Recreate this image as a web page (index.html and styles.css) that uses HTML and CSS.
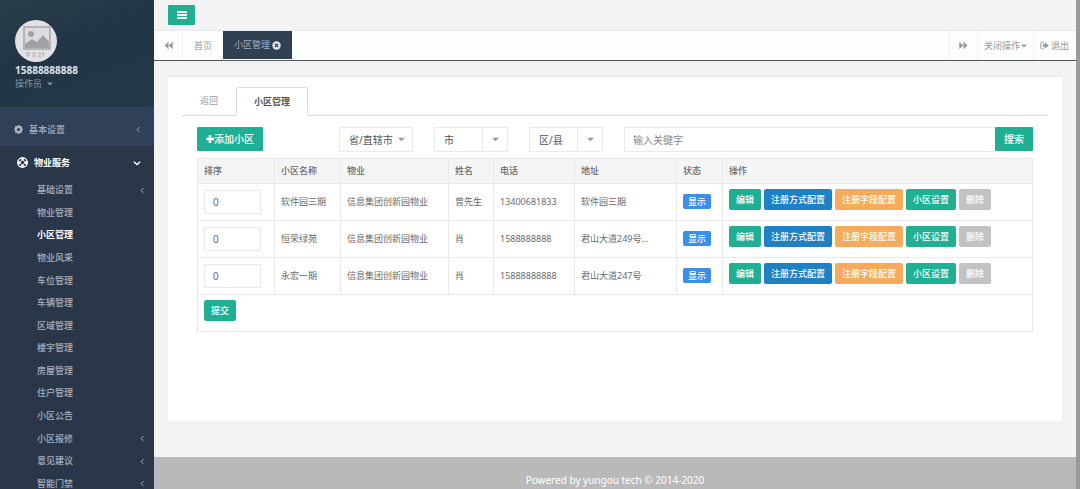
FILE: index.html
```html
<!DOCTYPE html>
<html lang="zh-CN">
<head>
<meta charset="utf-8">
<title>小区管理</title>
<link rel="stylesheet" href="styles.css">
</head>
<body>
<svg class="sprite" aria-hidden="true">
  <symbol id="left" viewBox="0 0 10 10"><path d="M6.500 1.500 3 5l3.500 3.500" fill="none" stroke="currentColor" stroke-width="1.400"/></symbol>
  <symbol id="down" viewBox="0 0 10 10"><path d="M1 3.500 5 7l4-3.500" fill="none" stroke="currentColor" stroke-width="1.700"/></symbol>
  <symbol id="caret" viewBox="0 0 8 8"><path d="M0 2h8L4 6z" fill="currentColor"/></symbol>
  <symbol id="rewind" viewBox="0 0 10 10"><path d="M5 .8v8.400L.5 5zM9.700.8v8.400L5.200 5z" fill="currentColor"/></symbol>
</svg>
<div class="app">
  <aside class="sidebar">
    <header class="profile">
      <svg class="avatar" viewBox="0 0 42 42" role="img" aria-label="头像">
        <circle cx="21" cy="21" r="21" fill="#e2e2e4"/>
        <path d="M9 7h26v22H9z" fill="#dcdcde" stroke="#a5a5aa" stroke-width="1.500"/>
        <circle cx="16" cy="14" r="3" fill="#a0a0a5"/>
        <path d="M10 28v-4l7-5 5 3 6-7 6 7v6z" fill="#a0a0a5"/>
        <path d="M11 33h4m-2-1v5m-2-2h4m2-2h4m-4 3h4m-2-3v4m4-4h3m-3 4h3m-3-2h3m2-3v5m-1-3h3" stroke="#c0aeb0" fill="none"/>
      </svg>
      <strong class="phone">15888888888</strong>
      <button class="role" type="button">操作员 <svg class="caret"><use href="#caret"/></svg></button>
    </header>
    <nav class="menu">
      <a class="group" href="#">
        <svg class="icon" viewBox="0 0 16 16"><circle cx="8" cy="8" r="4.600" fill="none" stroke="currentColor" stroke-width="3.800"/><path d="M8 0v3m0 10v3M0 8h3m10 0h3M2.300 2.300l2 2m7.400 7.400 2 2M13.700 2.300l-2 2m-7.400 7.400-2 2" stroke="currentColor" stroke-width="3"/></svg>
        <span>基本设置</span><svg class="arrow"><use href="#left"/></svg>
      </a>
      <a class="group open" href="#">
        <svg class="icon" viewBox="0 0 16 16"><circle cx="8" cy="8" r="6.900" fill="none" stroke="currentColor" stroke-width="2"/><circle cx="8" cy="8" r="3.200" fill="none" stroke="currentColor" stroke-width="1"/><path d="M8 1v4m0 6v4M1 8h4m6 0h4" stroke="currentColor" stroke-width="4"/></svg>
        <span>物业服务</span><svg class="arrow"><use href="#down"/></svg>
      </a>
      <ul class="submenu">
        <li><a href="#">基础设置<svg class="arrow"><use href="#left"/></svg></a></li>
        <li><a href="#">物业管理</a></li>
        <li><a class="current" href="#">小区管理</a></li>
        <li><a href="#">物业风采</a></li>
        <li><a href="#">车位管理</a></li>
        <li><a href="#">车辆管理</a></li>
        <li><a href="#">区域管理</a></li>
        <li><a href="#">楼宇管理</a></li>
        <li><a href="#">房屋管理</a></li>
        <li><a href="#">住户管理</a></li>
        <li><a href="#">小区公告</a></li>
        <li><a href="#">小区报修<svg class="arrow"><use href="#left"/></svg></a></li>
        <li><a href="#">意见建议<svg class="arrow"><use href="#left"/></svg></a></li>
        <li><a href="#">智能门禁<svg class="arrow"><use href="#left"/></svg></a></li>
      </ul>
    </nav>
  </aside>

  <div class="page">
    <header class="topbar">
      <button class="toggle" type="button" aria-label="菜单"><svg viewBox="0 0 10 8"><path d="M0 1h10M0 4h10M0 7h10" stroke="currentColor" stroke-width="1.800"/></svg></button>
    </header>
    <nav class="tabs">
      <button class="tab scroll" type="button" aria-label="向左"><svg class="small"><use href="#rewind"/></svg></button>
      <a class="tab home" href="#">首页</a>
      <a class="tab active" href="#">小区管理
        <svg class="close" viewBox="0 0 10 10"><circle cx="5" cy="5" r="4.700" fill="#e4e7ea"/><path d="m3.200 3.200 3.600 3.600m0-3.600L3.200 6.800" stroke="#2f4050" stroke-width="1.500"/></svg></a>
      <button class="tab forward" type="button" aria-label="向右"><svg class="small flip"><use href="#rewind"/></svg></button>
      <button class="tab ops" type="button">关闭操作<svg class="caret"><use href="#caret"/></svg></button>
      <a class="tab exit" href="#"><svg class="small" viewBox="0 0 10 10"><path d="M4 1.500H2Q.8 1.500.8 2.700v4.600Q.8 8.500 2 8.500h2" fill="none" stroke="currentColor"/><path d="M3 3.700h2.500V1.400L9.700 5 5.500 8.600V6.300H3z" fill="currentColor"/></svg>退出</a>
    </nav>
    <main class="content">
      <section class="card">
        <nav class="card-tabs">
          <a href="#">返回</a>
          <a class="selected" href="#">小区管理</a>
        </nav>
        <div class="panel">
          <form class="filters">
            <button class="btn large add" type="button"><svg viewBox="0 0 8 8"><path d="M4 0v8M0 4h8" stroke="currentColor" stroke-width="2.600"/></svg>添加小区</button>
            <label class="pick"><select aria-label="省/直辖市"><option>省/直辖市</option></select><span class="drop plain"><svg class="caret"><use href="#caret"/></svg></span></label>
            <label class="pick"><select aria-label="市"><option>市</option></select><span class="drop"><svg class="caret"><use href="#caret"/></svg></span></label>
            <label class="pick"><select aria-label="区/县"><option>区/县</option></select><span class="drop"><svg class="caret"><use href="#caret"/></svg></span></label>
            <div class="search">
              <input type="text" placeholder="输入关键字" aria-label="输入关键字">
              <button class="btn large" type="button">搜索</button>
            </div>
          </form>
          <table class="list">
            <colgroup><col class="c-order"><col class="c-name"><col class="c-company"><col class="c-person"><col class="c-phone"><col class="c-address"><col class="c-state"><col></colgroup>
            <thead>
              <tr><th>排序</th><th>小区名称</th><th>物业</th><th>姓名</th><th>电话</th><th>地址</th><th>状态</th><th>操作</th></tr>
            </thead>
            <tbody>
              <tr>
                <td><input class="order" type="text" value="0" aria-label="排序"></td><td>软件园三期</td><td>信息集团创新园物业</td><td>曾先生</td><td>13400681833</td><td>软件园三期</td><td><span class="badge">显示</span></td>
                <td class="top"><div class="actions"><button class="btn" type="button">编辑</button><button class="btn blue" type="button">注册方式配置</button><button class="btn orange" type="button">注册字段配置</button><button class="btn" type="button">小区设置</button><button class="btn grey" type="button">删除</button></div></td>
              </tr>
              <tr>
                <td><input class="order" type="text" value="0" aria-label="排序"></td><td>恒荣绿苑</td><td>信息集团创新园物业</td><td>肖</td><td>1588888888</td><td>君山大道249号...</td><td><span class="badge">显示</span></td>
                <td class="top"><div class="actions"><button class="btn" type="button">编辑</button><button class="btn blue" type="button">注册方式配置</button><button class="btn orange" type="button">注册字段配置</button><button class="btn" type="button">小区设置</button><button class="btn grey" type="button">删除</button></div></td>
              </tr>
              <tr>
                <td><input class="order" type="text" value="0" aria-label="排序"></td><td>永宏一期</td><td>信息集团创新园物业</td><td>肖</td><td>15888888888</td><td>君山大道247号</td><td><span class="badge">显示</span></td>
                <td class="top"><div class="actions"><button class="btn" type="button">编辑</button><button class="btn blue" type="button">注册方式配置</button><button class="btn orange" type="button">注册字段配置</button><button class="btn" type="button">小区设置</button><button class="btn grey" type="button">删除</button></div></td>
              </tr>
              <tr class="submit"><td class="top" colspan="8"><div class="actions"><button class="btn" type="button">提交</button></div></td></tr>
            </tbody>
          </table>
        </div>
      </section>
    </main>
    <footer class="footer">Powered by yungou tech © 2014-2020</footer>
  </div>
</div>
</body>
</html>
```

FILE: styles.css
```css
* { box-sizing: border-box; }

body {
  margin: 0;
  font: 9px/16px "Noto Sans", "Noto Sans CJK SC", sans-serif;
  color: #676a6c;
}

a { color: inherit; text-decoration: none; }
button, input, select { font: inherit; color: inherit; margin: 0; }
button { border: 0; background: none; padding: 0; cursor: pointer; }
.sprite { position: absolute; width: 0; height: 0; }
.caret { width: 6px; height: 6px; flex: none; }

.app {
  display: flex;
  height: 100vh;
  overflow: hidden;
  border-right: 4px solid #999a9c;
}

/* Sidebar */
.sidebar { flex: none; width: 154px; background: #293749; color: #a7b1c2; overflow: hidden; }

.profile {
  display: flex;
  flex-direction: column;
  align-items: flex-start;
  height: 107px;
  padding: 20px 15px 0;
  background: linear-gradient(160deg, #2a3d49, #213545 45%, #243849);
}
.avatar { width: 42px; height: 42px; }
.phone { font-size: 10px; color: #dfe4ed; }
.role { display: flex; align-items: center; gap: 5px; line-height: 12px; color: #8095a8; }

.group {
  display: flex;
  align-items: center;
  gap: 6px;
  height: 39px;
  padding: 6px 12px 0 14px;
  background: #2f4058;
  font-weight: 500;
}
.group .icon { width: 9px; height: 9px; }
.group .arrow { margin-left: auto; }
.arrow { width: 7px; height: 7px; }
.group.open { height: 33px; padding: 0 13px 0 17px; background: #293749; color: #fff; font-weight: 700; }
.group.open .icon { width: 11px; height: 11px; }
.group.open .arrow { width: 8px; height: 8px; }

.submenu { display: grid; grid-auto-rows: 1fr; height: 316px; margin: 0; padding: 0; list-style: none; }
.submenu a {
  display: flex;
  align-items: center;
  justify-content: space-between;
  height: 100%;
  padding: 0 8px 0 37px;
  font-weight: 500;
}
.submenu .current { color: #fff; font-weight: 700; }

/* Page frame */
.page { flex: 1; min-width: 0; display: flex; flex-direction: column; background: #f3f3f4; }
.topbar { flex: none; height: 31px; padding: 5px 14px; border-bottom: 1px solid #e7eaec; }
.toggle { display: flex; align-items: center; justify-content: center; width: 27px; height: 20px; border-radius: 1px; background: #1fb094; color: #fff; }
.toggle svg { width: 10px; height: 8px; }

.tabs { flex: none; display: flex; height: 30px; background: #fcfdfd; border-bottom: 1px solid #4d565f; color: #999; }
.tab { display: flex; align-items: center; justify-content: center; padding: 0 11px; }
.tab .small { width: 9px; height: 9px; }
.tab .flip { transform: scaleX(-1); }
.tab.scroll { width: 29px; padding: 0; border-right: 1px solid #f0f0f0; }
.tab.active { gap: 2px; height: 28px; background: #2f4050; color: #a7b1c2; }
.tab .close { width: 9px; height: 9px; }
.forward { margin-left: auto; width: 28px; padding: 0; border-left: 1px solid #f3f3f3; }
.tab.ops { gap: 1px; padding: 0 6px; border-left: 1px solid #eee; border-right: 1px solid #eee; }
.tab.exit { gap: 2px; padding: 0 7px 0 6px; }

/* Card */
.content { flex: 1; padding: 15px 14px 36px; }
.card { height: 100%; padding: 10px 14px; background: #fff; border-top: 1px solid #e7eaec; }
.card-tabs { display: flex; height: 29px; border-bottom: 1px solid #d9d9db; color: #9a9ca8; }
.card-tabs a { display: flex; align-items: center; padding: 0 18px; }
.card-tabs .selected {
  margin-bottom: -1px;
  padding: 0 17px;
  border: 1px solid #ddd;
  border-bottom-color: #fff;
  border-radius: 2px 2px 0 0;
  background: #fff;
  color: #555;
  font-weight: 700;
}
.panel { padding: 11px 15px 0; }

.btn {
  height: 21px;
  padding: 0 7px;
  border-radius: 2px;
  background: #1fb094;
  color: #fff;
  font-weight: 500;
  line-height: 20px;
  white-space: nowrap;
}
.btn.blue { background: #1f80c3; }
.btn.orange { background: #f6aa5b; }
.btn.grey { background: #c2c2c3; }
.btn.large { height: 24px; padding: 0 9px; border-radius: 1px; font-size: 10px; }
.add { display: flex; align-items: center; }
.add svg { width: 8px; height: 8px; }

/* Filters */
.filters { display: flex; align-items: flex-start; gap: 21px; font-size: 10px; }
.add { margin-right: 55px; }
.pick { display: flex; width: 74px; height: 25px; border: 1px solid #e9eaeb; }
.pick select { flex: 1; min-width: 0; padding: 0 0 0 9px; border: 0; background: #fff; appearance: none; overflow: visible; color: #555; }
.drop { display: flex; align-items: center; justify-content: center; width: 25px; border-left: 1px solid #e9eaeb; color: #999; }
.drop.plain { width: 17px; padding-right: 5px; border-left: 0; }
.drop .caret { width: 7px; height: 7px; }
.search { flex: 1; display: flex; }
.search input { flex: 1; min-width: 0; height: 25px; padding: 0 8px; border: 1px solid #e9eaeb; border-right: 0; }
.search input::placeholder { color: #888; }

/* Table */
.list { width: 100%; margin-top: 6px; table-layout: fixed; border-collapse: collapse; }
.list th, .list td { padding: 6px; border: 1px solid #e9e9ea; text-align: left; white-space: nowrap; }
.list th { height: 25px; padding: 0 6px; background: #f5f5f6; font-weight: 500; }
.list td { height: 37px; }
.list .top { padding-top: 5px; vertical-align: top; }
.c-order { width: 77px; }
.c-name { width: 66px; }
.c-company { width: 108px; }
.c-person { width: 45px; }
.c-phone { width: 81px; }
.c-address { width: 102px; }
.c-state { width: 46px; }
.order { display: block; width: 57px; height: 24px; padding: 0 8px; border: 1px solid #e9eaeb; font-size: 10px; }
.badge { display: inline-block; width: 28px; border-radius: 2px; background: #398fea; color: #fff; text-align: center; font-weight: 500; line-height: 15px; }
.actions { display: flex; gap: 3px; }

.footer { flex: none; height: 32px; padding-top: 15px; background: #b9b9bb; color: #fff; font-size: 10px; text-align: center; }
```
